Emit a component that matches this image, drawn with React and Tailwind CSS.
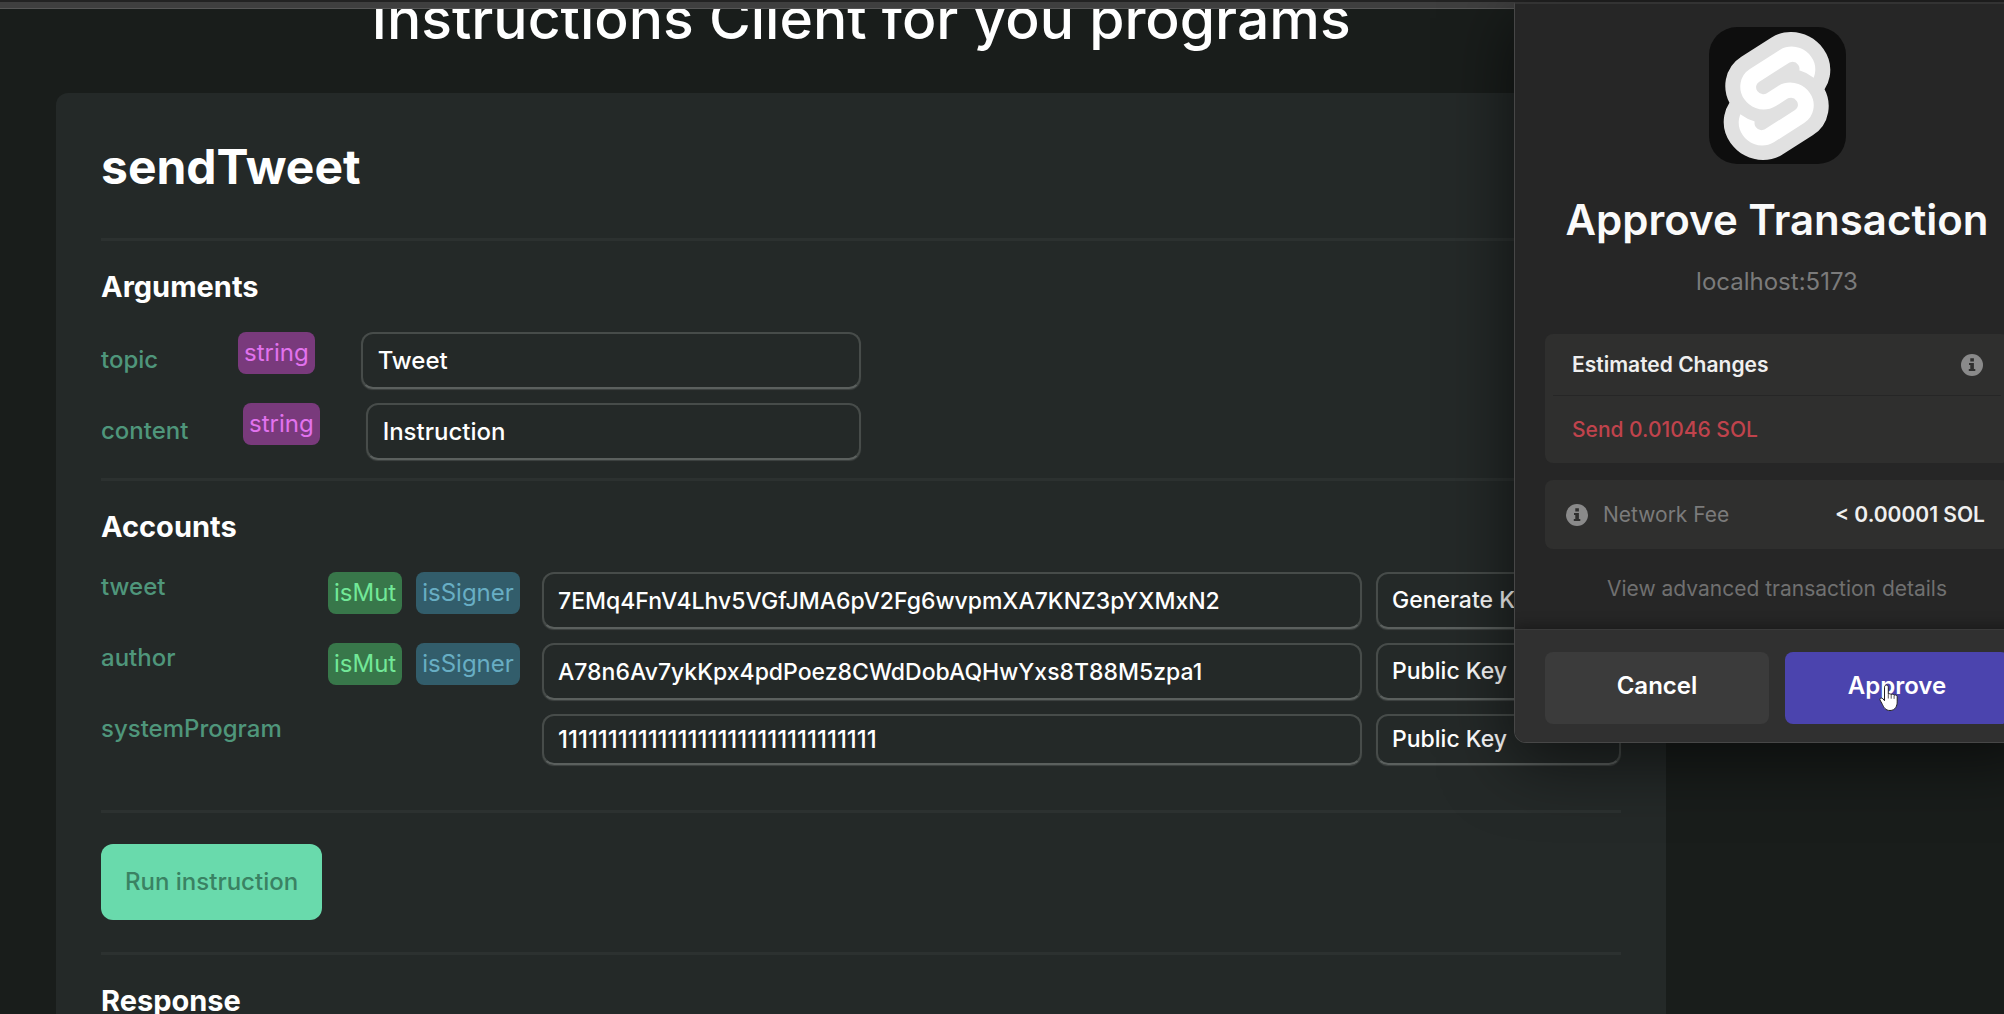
import React from "react";

const field =
  "min-w-0 rounded-xl border-2 border-[#474c4a] border-b-[#5b605e] bg-transparent font-medium text-white outline-none shadow-[0_1px_1px_rgba(91,96,94,0.5)]";

function Badge({ tone, children }) {
  const tones = {
    purple: "bg-[#793a7c] text-[#e272ee]",
    green: "bg-[#38774a] text-[#72e898]",
    blue: "bg-[#325d6b] text-[#68aec4]",
  };
  return (
    <span className={`flex h-[42px] shrink-0 items-center rounded-lg px-1.5 ${tones[tone]}`}>
      {children}
    </span>
  );
}

function Rule() {
  return <hr className="h-[3px] border-0 bg-[#2c3130]" />;
}

function ArgumentRow({ name, labelWidth, value }) {
  return (
    <div className="flex items-start">
      <label
        htmlFor={name}
        className={`flex h-14 shrink-0 items-center font-medium text-[#4f967b] ${labelWidth}`}
      >
        {name}
      </label>
      <Badge tone="purple">string</Badge>
      <input id={name} defaultValue={value} className={`${field} ml-[46px] h-[57px] flex-1 px-[15px]`} />
    </div>
  );
}

function AccountRow({ name, flags, value, kind, height, textSize }) {
  return (
    <div className="flex items-start">
      <label htmlFor={name} className="w-[227px] shrink-0 font-medium leading-[30px] text-[#4f967b]">
        {name}
      </label>
      <div className="flex w-[214px] shrink-0 gap-3.5">
        {flags && (
          <>
            <Badge tone="green">isMut</Badge>
            <Badge tone="blue">isSigner</Badge>
          </>
        )}
      </div>
      <input id={name} defaultValue={value} className={`${field} ${height} ${textSize} flex-1 px-3.5`} />
      <select
        aria-label={`${name} source`}
        defaultValue={kind}
        className={`${field} ${height} ml-3.5 w-[245px] appearance-none px-3.5 text-[23px]`}
      >
        <option>Generate Keypair</option>
        <option>Public Key</option>
      </select>
    </div>
  );
}

function InfoIcon() {
  return (
    <svg viewBox="0 0 22 22" className="size-[22px] shrink-0" aria-hidden="true">
      <circle cx="11" cy="11" r="11" fill="#8a8a8a" />
      <path d="M9.3 4.2h3.6v3.2H9.3zM8 9h4.9v6h1.4v2H7.8v-2h1.5v-4H8z" fill="#2f2f2e" />
    </svg>
  );
}

function SvelteLogo() {
  return (
    <div className="flex size-[137px] items-center justify-center rounded-[28px] bg-[#0e0e0e]">
      <svg viewBox="0 0 24 24" className="size-32" aria-hidden="true">
        <path
          fill="#e1e1e1"
          d="M20.712 3.175C18.484-.015 14.082-.96 10.9 1.068L5.31 4.63a6.412 6.412 0 0 0-2.896 4.295 6.753 6.753 0 0 0 .666 4.336 6.43 6.43 0 0 0-.96 2.396 6.833 6.833 0 0 0 1.168 5.167c2.229 3.19 6.63 4.135 9.812 2.108l5.59-3.562a6.41 6.41 0 0 0 2.896-4.295 6.756 6.756 0 0 0-.665-4.336 6.429 6.429 0 0 0 .958-2.396 6.831 6.831 0 0 0-1.167-5.168Z"
        />
        <path
          fill="#fff"
          d="M10.354 21.125a4.44 4.44 0 0 1-4.765-1.767 4.109 4.109 0 0 1-.703-3.107 3.898 3.898 0 0 1 .134-.522l.105-.321.287.21a7.21 7.21 0 0 0 2.186 1.092l.208.063-.02.208a1.253 1.253 0 0 0 .226.83 1.337 1.337 0 0 0 1.435.533 1.231 1.231 0 0 0 .343-.15l5.59-3.562a1.164 1.164 0 0 0 .524-.778 1.242 1.242 0 0 0-.211-.937 1.338 1.338 0 0 0-1.435-.533 1.23 1.23 0 0 0-.343.15l-2.133 1.36a4.078 4.078 0 0 1-1.135.499 4.44 4.44 0 0 1-4.765-1.766 4.108 4.108 0 0 1-.702-3.108 3.855 3.855 0 0 1 1.742-2.582l5.589-3.563a4.072 4.072 0 0 1 1.135-.499 4.44 4.44 0 0 1 4.765 1.767 4.109 4.109 0 0 1 .703 3.107 3.943 3.943 0 0 1-.134.522l-.105.321-.286-.21a7.204 7.204 0 0 0-2.187-1.093l-.208-.063.02-.207a1.255 1.255 0 0 0-.226-.831 1.337 1.337 0 0 0-1.435-.532 1.231 1.231 0 0 0-.343.15L8.62 9.368a1.162 1.162 0 0 0-.524.778 1.24 1.24 0 0 0 .211.937 1.338 1.338 0 0 0 1.435.533 1.235 1.235 0 0 0 .344-.151l2.132-1.36a4.067 4.067 0 0 1 1.135-.498 4.44 4.44 0 0 1 4.765 1.766 4.108 4.108 0 0 1 .702 3.108 3.857 3.857 0 0 1-1.742 2.583l-5.589 3.562a4.072 4.072 0 0 1-1.135.499"
        />
      </svg>
    </div>
  );
}

function HandCursor() {
  return (
    <svg viewBox="0 0 20 28" className="pointer-events-none absolute left-[94px] top-8 h-7 w-5" aria-hidden="true">
      <path
        d="M5.5 3.2C5.5 1.9 6.3 1 7.4 1s1.9.9 1.9 2.200v7c.3-.7 2.600-.7 2.900.5.5-.9 2.700-.7 2.900.6.7-.8 3.100-.5 3.100 1.400v5.200c0 3.600-1.600 8.600-7.200 8.600-4.700 0-6.100-3.200-7.600-6.100L1 16c-.7-1.500 1.500-2.900 2.900-1.200l1.600 1.900z"
        fill="#fff"
        stroke="#222"
        strokeWidth="1"
      />
      <path d="M9.300 10.500v4M12.200 11v3.700M15.100 11.600v3.300" stroke="#333" strokeWidth="0.800" fill="none" />
    </svg>
  );
}

function ApprovalPopup() {
  return (
    <section
      aria-label="Approve Transaction"
      className="absolute -right-9 top-[2px] flex w-[526px] flex-col overflow-hidden rounded-b-xl border border-[#474747] border-t-2 border-t-[#333] bg-[#262626] shadow-[0_16px_70px_rgba(0,0,0,0.6)] font-['Inter','Liberation_Sans',sans-serif]"
    >
      <div className="flex flex-col items-center px-[30px] pt-[23px]">
        <SvelteLogo />
        <h2 className="mt-[31px] whitespace-nowrap text-[42px] font-semibold leading-[50px] text-[#fafafa]">
          Approve Transaction
        </h2>
        <p className="mt-[22px] text-2xl leading-[30px] text-[#7b7b7b]">localhost:5173</p>

        <div className="mt-[37px] w-full rounded-lg bg-[#2f2f2e] text-[21px]">
          <div className="mx-2 flex h-[62px] items-center justify-between border-b border-[#262626] pl-[19px] pr-[18px]">
            <h3 className="font-semibold text-[#efefef]">Estimated Changes</h3>
            <InfoIcon />
          </div>
          <p className="flex h-[67px] items-center px-[27px] font-medium text-[#c0434c]">Send 0.01046 SOL</p>
        </div>

        <div className="mt-[17px] flex h-[69px] w-full items-center rounded-lg bg-[#2f2f2e] pl-[21px] pr-6 text-[21px]">
          <InfoIcon />
          <span className="ml-[15px] text-[#7b7b7b]">Network Fee</span>
          <span className="ml-auto font-semibold text-[#efefef]">&lt; 0.00001 SOL</span>
        </div>

        <a href="#details" className="mt-[25px] text-[21px] leading-[30px] text-[#707070]">
          View advanced transaction details
        </a>
      </div>

      <div className="mt-[25px] flex gap-4 border-t border-[#3a3a3a] bg-[#303030] px-[30px] pb-[18px] pt-[22px] text-2xl font-semibold text-white shadow-[0_-4px_12px_rgba(0,0,0,0.3)]">
        <button type="button" className="h-[72px] flex-1 rounded-lg bg-[#3b3b3b] pb-1">
          Cancel
        </button>
        <div className="relative flex flex-1">
          <button type="button" className="h-[72px] flex-1 rounded-lg bg-[#4b44ae] pb-1">
            Approve
          </button>
          <HandCursor />
        </div>
      </div>
    </section>
  );
}

export default function App() {
  return (
    <div className="relative h-screen overflow-hidden bg-[#191d1b] font-['Inter','Liberation_Sans',sans-serif] text-2xl text-white">
      <div className="h-[9px] border-b border-t-2 border-b-[#565656] border-t-[#232323] bg-[#3f3f3f]" />

      <main className="pl-14 pr-[338px]">
        <header className="flex h-[84px] items-end justify-center overflow-hidden pb-[42px]">
          <h1 className="whitespace-nowrap text-[57px] font-medium leading-[64px]">
            Instructions Client for you programs
          </h1>
        </header>

        <article className="rounded-t-xl bg-[#242928] px-[45px] pb-16 pt-11">
          <h2 className="text-5xl font-bold leading-[60px]">sendTweet</h2>
          <div className="mt-[41px]">
            <Rule />
          </div>

          <h3 className="mt-[26px] text-[29px] font-bold leading-10">Arguments</h3>
          <div className="mt-[25px] flex max-w-[760px] flex-col gap-3.5">
            <ArgumentRow name="topic" labelWidth="w-[137px]" value="Tweet" />
            <ArgumentRow name="content" labelWidth="w-[142px]" value="Instruction" />
          </div>

          <div className="mt-[18px]">
            <Rule />
          </div>
          <h3 className="mt-[26px] text-[29px] font-bold leading-10">Accounts</h3>
          <div className="mt-[25px] flex flex-col gap-3.5">
            <AccountRow
              name="tweet"
              flags
              value="7EMq4FnV4Lhv5VGfJMA6pV2Fg6wvpmXA7KNZ3pYXMxN2"
              kind="Generate Keypair"
              height="h-[57px]"
              textSize="text-[23px]"
            />
            <AccountRow
              name="author"
              flags
              value="A78n6Av7ykKpx4pdPoez8CWdDobAQHwYxs8T88M5zpa1"
              kind="Public Key"
              height="h-[57px]"
              textSize="text-[23px]"
            />
            <AccountRow
              name="systemProgram"
              value="11111111111111111111111111111111"
              kind="Public Key"
              height="h-[51px]"
              textSize="text-2xl"
            />
          </div>

          <div className="mt-[45px]">
            <Rule />
          </div>
          <button
            type="button"
            className="mt-[31px] h-[76px] rounded-xl bg-[#69daac] px-6 font-medium text-[#3a8263]"
          >
            Run instruction
          </button>

          <div className="mt-[32px]">
            <Rule />
          </div>
          <h3 className="mt-[26px] text-[29px] font-bold leading-10">Response</h3>
        </article>
      </main>

      <ApprovalPopup />
    </div>
  );
}
